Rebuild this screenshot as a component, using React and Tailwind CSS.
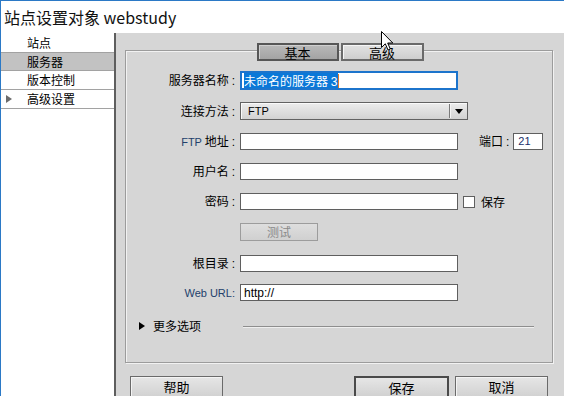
const cjk = 'font-["Noto_Sans_CJK_SC",sans-serif]';
const lat = 'font-["Liberation_Sans","Noto_Sans_CJK_SC",sans-serif]';

const sideItems = ['站点', '服务器', '版本控制', '高级设置'];

const Colon = () => <span className={`ml-[3px] text-[12px] ${lat}`}>:</span>;

const Field = ({w = 'w-[218px]', h = 'h-[17px]', children, className = ''}) => (
  <div className={`${w} ${h} bg-white border border-[#5f5f5f] flex items-center px-[2px] ${className}`}>{children}</div>
);

const Label = ({children}) => (
  <div className={`w-[110px] shrink-0 text-right pr-[1px] text-[12px] leading-none text-black ${cjk}`}>{children}</div>
);

const Row = ({mt, label, children}) => (
  <div className={`flex items-center ${mt}`}>
    <Label>{label}</Label>
    <div className="w-[4px] shrink-0" />
    {children}
  </div>
);

const Btn = ({children, w, strong}) => (
  <button
    className={`${w} h-[24px] flex items-start justify-center pt-[2px] text-[13px] leading-[16px] text-black bg-gradient-to-b from-[#e6e6e6] to-[#cfcfcf] ${
      strong ? 'border-2 border-[#4a4a4a]' : 'border border-[#6a6a6a] shadow-[inset_1px_1px_0_#f4f4f4]'
    } ${cjk}`}>
    {children}
  </button>
);

const Cursor = () => (
  <svg className="absolute left-[380px] top-[30px]" width="13" height="20" viewBox="0 0 13 20">
    <path d="M0.5 0.5 L0.5 16.5 L4.3 12.8 L7 19 L9.3 18 L6.7 12 L11.8 12 Z" fill="#fff" stroke="#000" strokeWidth="1" strokeLinejoin="round" />
  </svg>
);

export default function App() {
  return (
    <div className={`relative w-[564px] h-[396px] overflow-hidden bg-white border-l border-t border-[#2b79c6] flex flex-col ${cjk}`}>
      {/* title */}
      <div className="h-[32px] shrink-0 flex items-center pl-[3px] pb-[1px]">
        <span className={`text-[16px] leading-none text-[#111] ${cjk}`}>站点设置对象 webstudy</span>
      </div>

      <div className="flex flex-1 min-h-0">
        {/* sidebar */}
        <div className="w-[115px] shrink-0 bg-white border-r-2 border-[#5e5e5e]">
          {sideItems.map((t, i) => (
            <div
              key={t}
              className={`relative h-[19px] flex items-center pl-[26px] text-[12px] leading-none text-black ${
                i > 0 ? 'border-b border-[#a2a2a2]' : ''
              } ${i === 1 ? 'bg-[#c2c2c2] border-t border-[#a2a2a2]' : ''}`}>
              {i === 3 && <span className="absolute left-[5px] top-[5px] w-0 h-0 border-y-[4px] border-y-transparent border-l-[6px] border-l-[#6c6c6c]" />}
              {t}
            </div>
          ))}
        </div>

        {/* main panel */}
        <div className="flex-1 bg-[#d6d6d6] pl-[9px] pt-[17px] flex flex-col">
          {/* group box */}
          <div className="w-[428px] h-[313px] shrink-0 border border-[#9c9c9c] shadow-[inset_1px_1px_0_#f2f2f2,1px_1px_0_#f2f2f2] flex flex-col">
            {/* tabs */}
            <div className="flex justify-center gap-[2px] -mt-[8px] pl-[2px]">
              <div className="w-[82px] h-[18px] border-2 border-[#565656] bg-gradient-to-b from-[#b9b9b9] to-[#a4a4a4] shadow-[inset_1px_1px_0_#cfcfcf] flex items-center justify-center text-[13px] leading-none text-black">
                基本
              </div>
              <div className="w-[83px] h-[18px] border-2 border-[#6a6a6a] bg-gradient-to-b from-[#e2e2e2] to-[#cecece] shadow-[inset_1px_1px_0_#f6f6f6] flex items-center justify-center text-[13px] leading-none text-black">
                高级
              </div>
            </div>

            {/* server name */}
            <Row mt="mt-[10px]" label={<>服务器名称<Colon /></>}>
              <div className="w-[218px] h-[19px] bg-white border-2 border-[#1c74cc] flex items-center pl-[2px]">
                <span className="h-[15px] bg-[#0a78d8] text-white text-[12px] leading-[15px] pr-[1px] whitespace-nowrap">
                  未命名的服务器 <span className={lat}>3</span>
                </span>
                <span className="w-[1px] h-[14px] bg-[#e07a2a]" />
              </div>
            </Row>

            {/* connection */}
            <Row mt="mt-[12px]" label={<>连接方法<Colon /></>}>
              <div className="w-[228px] h-[18px] border border-[#626262] bg-gradient-to-b from-[#ececec] to-[#d2d2d2] shadow-[inset_1px_1px_0_#fafafa] flex items-center">
                <span className={`pl-[7px] flex-1 text-[11px] leading-none text-black ${lat}`}>FTP</span>
                <span className="w-[1px] h-[14px] bg-[#7a7a7a] shadow-[1px_0_0_#f4f4f4]" />
                <span className="w-[17px] flex justify-center">
                  <span className="w-0 h-0 border-x-[4px] border-x-transparent border-t-[5px] border-t-black" />
                </span>
              </div>
            </Row>

            {/* ftp address */}
            <Row mt="mt-[13px]" label={<><span className={`text-[11px] text-[#233f6b] ${lat}`}>FTP</span> 地址<Colon /></>}>
              <Field />
              <span className="ml-[21px] text-[12px] leading-none text-black">端口<Colon /></span>
              <Field w="w-[30px]" className="ml-[4px]">
                <span className={`pl-[2px] text-[11px] leading-none text-[#1a2f6a] ${lat}`}>21</span>
              </Field>
            </Row>

            <Row mt="mt-[13px]" label={<>用户名<Colon /></>}>
              <Field />
            </Row>

            <Row mt="mt-[13px]" label={<>密码<Colon /></>}>
              <Field />
              <span className="ml-[5px] w-[12px] h-[12px] bg-white border border-[#5f5f5f]" />
              <span className="ml-[6px] text-[12px] leading-none text-black">保存</span>
            </Row>

            {/* test button */}
            <Row mt="mt-[13px]" label="">
              <div className="w-[78px] h-[18px] border border-[#9c9c9c] bg-gradient-to-b from-[#dedede] to-[#d0d0d0] flex items-center justify-center text-[12px] leading-none text-[#8a8a8a]">
                测试
              </div>
            </Row>

            <Row mt="mt-[14px]" label={<>根目录<Colon /></>}>
              <Field />
            </Row>

            <Row mt="mt-[12px]" label={<span className={`text-[11px] text-[#233f6b] ${lat}`}>Web URL:</span>}>
              <Field>
                <span className={`pl-[1px] text-[12px] leading-none text-black ${lat}`}>http://</span>
              </Field>
            </Row>

            {/* more options */}
            <div className="flex items-center mt-[19px] pl-[13px]">
              <span className="w-0 h-0 border-y-[4px] border-y-transparent border-l-[6px] border-l-black" />
              <span className="ml-[8px] text-[12px] leading-none text-black">更多选项</span>
              <span className="ml-[42px] w-[291px] h-[1px] bg-[#8e8e8e] shadow-[0_1px_0_#efefef]" />
            </div>
          </div>

          {/* bottom buttons */}
          <div className="flex mt-[13px] pl-[5px]">
            <Btn w="w-[93px]">帮助</Btn>
            <div className="w-[131px]" />
            <Btn w="w-[95px]" strong>保存</Btn>
            <div className="w-[6px]" />
            <Btn w="w-[93px]">取消</Btn>
          </div>
        </div>
      </div>

      <Cursor />
    </div>
  );
}
